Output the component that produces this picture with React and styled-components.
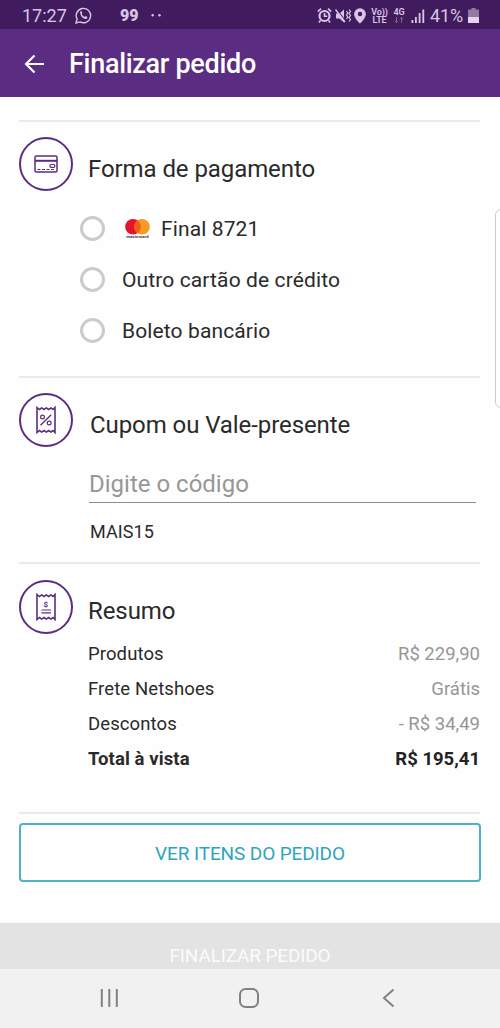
import { useState } from "react";
import styled, { createGlobalStyle } from "styled-components";

const GlobalStyle = createGlobalStyle`
  * {
    box-sizing: border-box;
  }

  body {
    margin: 0;
    background-color: #fefefe;
    font-family: Roboto, "Liberation Sans", sans-serif;
    color: #2a2a2a;
  }
`;

const Screen = styled.div`
  position: relative;
  display: flex;
  flex-direction: column;
  width: 500px;
  height: 1028px;
  overflow: hidden;
  background-color: #fefefe;
`;

const StatusBar = styled.div`
  display: flex;
  align-items: center;
  justify-content: space-between;
  height: 29px;
  padding: 2px 21px 0 22px;
  background-color: #401c5f;
  color: #d9c5e6;
`;

const StatusGroup = styled.div`
  display: flex;
  align-items: center;
`;

const Clock = styled.span`
  width: 53px;
  font-size: 18px;
  line-height: 20px;
`;

const AppBadge = styled.span`
  margin-left: 28px;
  width: 31px;
  font-size: 16px;
  font-weight: 900;
  line-height: 20px;
`;

const Network = styled.span`
  display: flex;
  flex-direction: column;
  align-items: center;
  width: ${({ $width }) => $width};
  margin-right: ${({ $gap }) => $gap};
  font-size: 9px;
  font-weight: 600;
  line-height: 8px;
  letter-spacing: -0.1px;
  white-space: nowrap;
`;

const Battery = styled.span`
  width: 34px;
  margin: 0 4px 0 5px;
  font-size: 18px;
  line-height: 20px;
  letter-spacing: -0.1px;
`;

const Header = styled.header`
  display: flex;
  align-items: center;
  height: 68px;
  padding: 1px 24px 0;
  background-color: #5b2d82;
  color: #fff;
`;

const HeaderTitle = styled.h1`
  margin: 0 0 0 24px;
  font-size: 27px;
  font-weight: 500;
  line-height: 32px;
  letter-spacing: -0.3px;
`;

const BackButton = styled.button`
  display: flex;
  padding: 0;
  border: none;
  background: none;
  color: inherit;
`;

const Content = styled.main`
  display: flex;
  flex-direction: column;
  height: 826px;
  padding: 23px 20px 0 19px;
`;

const Section = styled.section`
  height: ${({ $height }) => $height};
  padding-top: ${({ $top }) => $top || "15px"};
  border-top: 2px solid #ebebeb;
`;

const SectionHead = styled.div`
  display: flex;
  align-items: center;
  height: 54px;
`;

const IconCircle = styled.span`
  display: flex;
  align-items: center;
  justify-content: center;
  width: 54px;
  height: 54px;
  border: 2px solid #5b2d82;
  border-radius: 50%;
  color: #5b2d82;
`;

const SectionTitle = styled.h2`
  margin: ${({ $top }) => $top || "10px"} 0 0 ${({ $left }) => $left || "15px"};
  font-size: 24px;
  font-weight: 400;
  line-height: 30px;
  letter-spacing: -0.08px;
`;

const Options = styled.div`
  display: flex;
  flex-direction: column;
  padding: 12px 0 0 61px;
`;

const Option = styled.label`
  display: flex;
  align-items: center;
  height: 51px;
  font-size: 21px;
  letter-spacing: 0.12px;
`;

const Radio = styled.input`
  appearance: none;
  width: 25px;
  height: 25px;
  margin: 0 17px 0 0;
  border: 3px solid #cbcbcb;
  border-radius: 50%;

  &:checked {
    background: radial-gradient(#5b2d82 45%, transparent 50%);
  }
`;

const CardBrand = styled.span`
  display: flex;
  margin: 0 11px 0 3px;
`;

const Coupon = styled.div`
  display: flex;
  flex-direction: column;
  padding: 19px 4px 0 70px;
`;

const CouponInput = styled.input`
  height: 37px;
  padding: 0 0 1px;
  border: none;
  border-bottom: 1px solid #8d8d8d;
  outline: none;
  background: none;
  font-family: inherit;
  font-size: 24px;
  color: #2a2a2a;

  &::placeholder {
    color: #979797;
    opacity: 1;
  }
`;

const CouponCode = styled.span`
  margin: 17px 0 0 1px;
  font-size: 18px;
  line-height: 24px;
  letter-spacing: 0.1px;
`;

const Summary = styled.div`
  padding: 2px 0 0 69px;
`;

const SummaryRow = styled.div`
  display: flex;
  align-items: center;
  justify-content: space-between;
  height: 35px;
  font-size: 18.5px;
  font-weight: ${({ $total }) => ($total ? 700 : 400)};
  letter-spacing: 0.1px;
`;

const Amount = styled.span`
  color: ${({ $total }) => ($total ? "#222" : "#969696")};
  letter-spacing: 0;
`;

const OutlineButton = styled.button`
  display: block;
  width: 462px;
  height: 59px;
  padding: 2px 0 0;
  border: 2px solid #4fb1c9;
  border-radius: 4px;
  background-color: #fefefe;
  font-family: inherit;
  font-size: 19px;
  letter-spacing: -0.12px;
  color: #2da6bd;
`;

const SubmitButton = styled.button`
  flex: none;
  height: 46px;
  padding: 20px 0 0;
  border: none;
  background-color: #e3e3e3;
  font-family: inherit;
  font-size: 19px;
  line-height: 26px;
  letter-spacing: -0.15px;
  color: #fbfbfb;
`;

const NavBar = styled.nav`
  display: flex;
  align-items: center;
  justify-content: space-between;
  height: 59px;
  padding: 0 101px 1px 99px;
  background-color: #f1f1f1;
`;

const EdgePanel = styled.div`
  position: absolute;
  top: 209px;
  right: -7px;
  width: 12px;
  height: 199px;
  border: 1px solid #cdcdcd;
  border-radius: 6px;
  background-color: #fefefe;
`;

const WhatsappIcon = () => (
  <svg width="17" height="17" viewBox="0 0 17 17" fill="none" stroke="currentColor">
    <path d="M1 16l1.1-4A7.2 7.2 0 1 1 5 14.9z" strokeWidth="1.4" />
    <path
      d="M5.4 4.5c.5-.6 1.1-.5 1.4.2l.6 1.3-.7 1.1c.7 1.3 1.6 2.2 3 2.8l1-.9 1.7.9c.4.6-.4 1.7-1.4 2C8 12.2 4.3 8 5.4 4.5z"
      fill="currentColor"
      stroke="none"
    />
  </svg>
);

const DotsIcon = () => (
  <svg width="11" height="4" viewBox="0 0 11 4" fill="currentColor">
    <circle cx="1.7" cy="1.3" r="1.2" />
    <circle cx="8.5" cy="1.3" r="1.2" />
  </svg>
);

// alarm, muted speaker and location pin
const StatusIcons = () => (
  <svg width="54" height="18" viewBox="0 0 54 18" fill="none" stroke="currentColor">
    <circle cx="7.5" cy="9" r="5" strokeWidth="2.2" />
    <path d="M7.5 6v3.300h2.800M.8 4.600l3.200-2.900M14.200 4.600l-3.200-2.900M3.500 13.500l-1.700 2M11.500 13.500l1.700 2" strokeWidth="1.6" />
    <path d="M19 6.500h3.500l4.500-4v13l-4.500-4H19z" fill="currentColor" stroke="none" />
    <path d="M19.500 2.200L29 14.500" stroke="#401c5f" strokeWidth="1.200" />
    <path d="M18.500 2.500l9.500 12.500" strokeWidth="1.400" />
    <path d="M29.500 4l1.300 2-1.300 2 1.300 2-1.300 2M32 2.500l1.500 2-1.500 2 1.500 2-1.500 2 1.500 2-1.500 2" strokeWidth="1.200" />
    <path
      d="M43 1.200a5.900 5.900 0 0 0-5.900 5.900c0 4.300 5.900 9.600 5.900 9.600s5.900-5.300 5.900-9.600A5.900 5.900 0 0 0 43 1.200zm0 3.600a2.200 2.200 0 1 1 0 4.400 2.200 2.200 0 0 1 0-4.400z"
      fill="currentColor"
      fillRule="evenodd"
      stroke="none"
    />
  </svg>
);

const DataArrows = () => (
  <svg width="10" height="8" viewBox="0 0 10 8" fill="none" stroke="#7d6096">
    <path d="M2.500 1v5.500M.8 4.800l1.700 1.800 1.700-1.800M7.500 7V1.500M5.800 3.200l1.700-1.800 1.700 1.800" />
  </svg>
);

const SignalIcon = () => (
  <svg width="14" height="14" viewBox="0 0 14 14" fill="currentColor">
    <path d="M.5 11h1.800v3H.5zM4 8h1.800v6H4zM7.700 4h1.800v10H7.700zM11.400.5h1.800V14h-1.800z" />
  </svg>
);

const BatteryIcon = () => (
  <svg width="11" height="15" viewBox="0 0 11 15">
    <path d="M3.500 0h4v1.500H11V15H0V1.500h3.500z" fill="#927aa5" />
    <path d="M0 9h11v6H0z" fill="#e3d3ec" />
  </svg>
);

const BackArrow = () => (
  <svg width="21" height="20" viewBox="0 0 21 20" fill="none" stroke="currentColor" strokeWidth="2.2">
    <path d="M20 10H2.500M10.500 1.500L2 10l8.500 8.500" />
  </svg>
);

const CardIcon = () => (
  <svg width="24" height="18" viewBox="0 0 24 18" fill="none" stroke="currentColor">
    <rect x="1" y="1" width="22" height="16" rx="1.500" strokeWidth="1.500" />
    <path d="M1 5.800h22" strokeWidth="2" />
    <rect x="16" y="9.500" width="4.800" height="2.800" rx="1" strokeWidth="1.200" />
    <path d="M3.500 14.500h17" strokeWidth="1.200" strokeDasharray="3 1.500" />
  </svg>
);

const TICKET = "M1 1.500l2.500 2 2.200-1.600 2.400 1.600 2.200-1.600 2.400 1.600 2.200-1.600 2.100 1.600 2-2V26.500l-2-2-2.100 1.600-2.200-1.600-2.400 1.600-2.200-1.600-2.400 1.600-2.200-1.600-2.500 2z";

const CouponIcon = () => (
  <svg width="20" height="28" viewBox="0 0 20 28" fill="none" stroke="currentColor">
    <path d={TICKET} strokeWidth="1.6" />
    <circle cx="6.500" cy="11" r="1.900" strokeWidth="1.200" />
    <circle cx="13.200" cy="17" r="1.900" strokeWidth="1.200" />
    <path d="M15.200 8.800L4.500 19.200" strokeWidth="1.300" />
  </svg>
);

const Dollar = styled.text`
  font-size: 8px;
  font-weight: 700;
  text-anchor: middle;
`;

const ReceiptIcon = () => (
  <svg width="20" height="28" viewBox="0 0 20 28" fill="none" stroke="currentColor">
    <path d={TICKET} strokeWidth="1.6" />
    <Dollar x="9.700" y="14" fill="currentColor" stroke="none">$</Dollar>
    <path d="M5.500 17h9.500M5.500 19.800h9.500" strokeWidth="1.200" />
  </svg>
);

const BrandName = styled.text`
  font-size: 4px;
  font-weight: 700;
`;

const MastercardIcon = () => (
  <svg width="25" height="22" viewBox="0 0 25 22">
    <circle cx="8" cy="8.800" r="7.800" fill="#e3122d" />
    <circle cx="17" cy="8.800" r="7.800" fill="#f59a22" />
    <path d="M12.500 2.400a7.800 7.800 0 0 1 0 12.800 7.800 7.800 0 0 1 0-12.800z" fill="#f45b16" />
    <BrandName x="1.200" y="20" fill="#333" textLength="22.500" lengthAdjust="spacingAndGlyphs">mastercard</BrandName>
  </svg>
);

const RecentsIcon = () => (
  <svg width="20" height="20" viewBox="0 0 20 20" stroke="#818181" strokeWidth="2">
    <path d="M2.800 1v18M10.300 1v18M17.800 1v18" />
  </svg>
);

const HomeIcon = () => (
  <svg width="20" height="20" viewBox="0 0 20 20" fill="none" stroke="#818181" strokeWidth="2">
    <rect x="1" y="1" width="18" height="18" rx="5.500" />
  </svg>
);

const NavBackIcon = () => (
  <svg width="20" height="20" viewBox="0 0 20 20" fill="none" stroke="#818181" strokeWidth="2">
    <path d="M14.500 1.500L5 10l9.500 8.500" />
  </svg>
);

const summary = [
  { label: "Produtos", value: "R$ 229,90" },
  { label: "Frete Netshoes", value: "Grátis" },
  { label: "Descontos", value: "- R$ 34,49" },
  { label: "Total à vista", value: "R$ 195,41", total: true },
];

const App = () => {
  const [payment, setPayment] = useState("");
  const [code, setCode] = useState("");

  const radio = (value) => (
    <Radio
      type="radio"
      name="payment"
      checked={payment === value}
      onChange={() => setPayment(value)}
    />
  );

  return (
    <>
      <GlobalStyle />
      <Screen>
        <StatusBar>
          <StatusGroup>
            <Clock>17:27</Clock>
            <WhatsappIcon />
            <AppBadge>99</AppBadge>
            <DotsIcon />
          </StatusGroup>
          <StatusGroup>
            <StatusIcons />
            <Network $width="17px" $gap="5px">
              <span>Vo))</span>
              <span>LTE</span>
            </Network>
            <Network $width="12px" $gap="6px">
              <span>4G</span>
              <DataArrows />
            </Network>
            <SignalIcon />
            <Battery>41%</Battery>
            <BatteryIcon />
          </StatusGroup>
        </StatusBar>

        <Header>
          <BackButton aria-label="Voltar">
            <BackArrow />
          </BackButton>
          <HeaderTitle>Finalizar pedido</HeaderTitle>
        </Header>

        <Content>
          <Section $height="256px">
            <SectionHead>
              <IconCircle><CardIcon /></IconCircle>
              <SectionTitle>Forma de pagamento</SectionTitle>
            </SectionHead>
            <Options>
              <Option>
                {radio("mastercard")}
                <CardBrand><MastercardIcon /></CardBrand>
                Final 8721
              </Option>
              <Option>
                {radio("cartao")}
                Outro cartão de crédito
              </Option>
              <Option>
                {radio("boleto")}
                Boleto bancário
              </Option>
            </Options>
          </Section>

          <Section $height="186px">
            <SectionHead>
              <IconCircle><CouponIcon /></IconCircle>
              <SectionTitle $left="17px">Cupom ou Vale-presente</SectionTitle>
            </SectionHead>
            <Coupon>
              <CouponInput
                placeholder="Digite o código"
                value={code}
                onChange={(e) => setCode(e.target.value)}
              />
              <CouponCode>MAIS15</CouponCode>
            </Coupon>
          </Section>

          <Section $height="250px" $top="16px">
            <SectionHead>
              <IconCircle><ReceiptIcon /></IconCircle>
              <SectionTitle $top="8px">Resumo</SectionTitle>
            </SectionHead>
            <Summary>
              {summary.map(({ label, value, total }) => (
                <SummaryRow key={label} $total={total}>
                  <span>{label}</span>
                  <Amount $total={total}>{value}</Amount>
                </SummaryRow>
              ))}
            </Summary>
          </Section>

          <Section $height="70px" $top="9px">
            <OutlineButton>VER ITENS DO PEDIDO</OutlineButton>
          </Section>
        </Content>

        <SubmitButton disabled>FINALIZAR PEDIDO</SubmitButton>

        <NavBar>
          <RecentsIcon />
          <HomeIcon />
          <NavBackIcon />
        </NavBar>
        <EdgePanel />
      </Screen>
    </>
  );
};

export default App;
